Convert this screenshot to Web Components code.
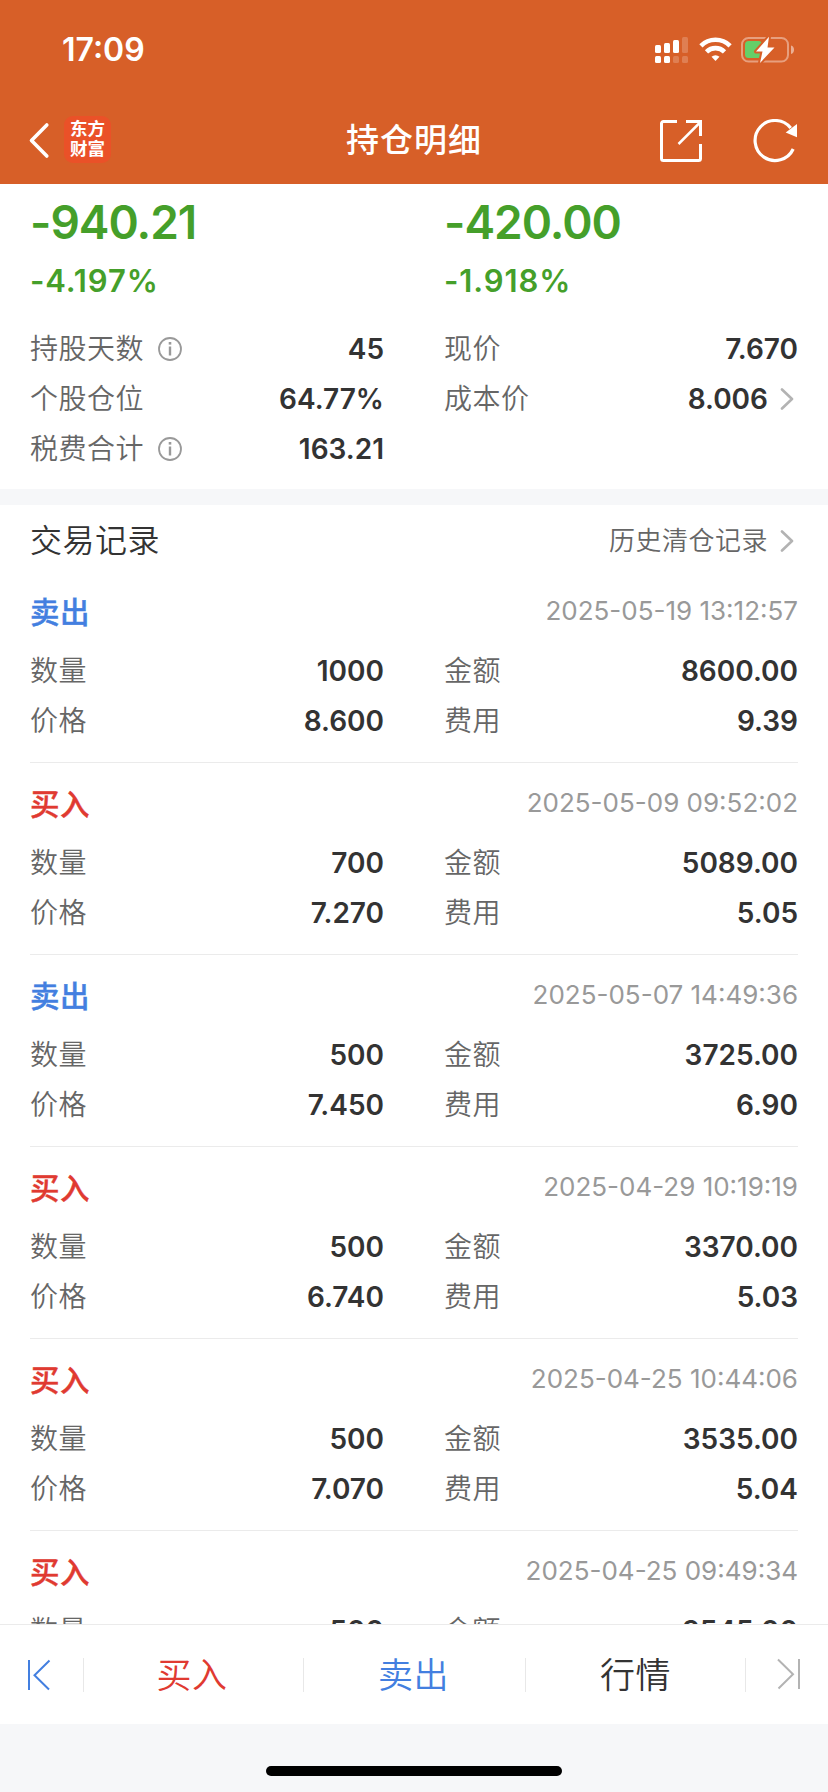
<!DOCTYPE html>
<html lang="zh-CN">
<head>
<meta charset="UTF-8">
<meta name="viewport" content="width=device-width, initial-scale=1.0">
<title>持仓明细</title>
<style>
    body {
        margin: 0;
        background: #fff;
        color: #333;
        font-family: Inter, "Noto Sans CJK SC", sans-serif;
    }
</style>
</head>
<body>
<position-page></position-page>

<script>
class StatusBar extends HTMLElement {
    constructor() {
        super();
        this.attachShadow({ mode: 'open' });
    }

    connectedCallback() {
        this.shadowRoot.innerHTML = `
            <style>
                :host {
                    display: flex;
                    justify-content: space-between;
                    align-items: center;
                    height: 99px;
                    padding: 0 33px 0 62px;
                    color: #fff;
                }

                .time {
                    font-size: 32px;
                    font-weight: 600;
                    line-height: 40px;
                }

                .icons {
                    display: flex;
                    gap: 11px;
                }

                svg {
                    display: block;
                }
            </style>
            <span class="time">${this.getAttribute('time')}</span>
            <div class="icons">
                <svg width="33" height="28" viewBox="0 0 33 28" fill="#fff">
                    <rect x="0" y="9" width="6" height="8" rx="1.5"/>
                    <rect x="9" y="7" width="6" height="10" rx="1.5"/>
                    <rect x="18" y="4" width="6" height="13" rx="1.5"/>
                    <rect x="27" y="1" width="6" height="16" rx="1.5" opacity=".2"/>
                    <rect x="0" y="20" width="6" height="7" rx="1.5"/>
                    <rect x="9" y="20" width="6" height="7" rx="1.5"/>
                    <rect x="18" y="20" width="6" height="7" rx="1.5" opacity=".2"/>
                    <rect x="27" y="20" width="6" height="7" rx="1.5" opacity=".2"/>
                </svg>
                <svg width="33" height="28" viewBox="0 0 33 28" fill="none" stroke="#fff">
                    <path d="M1.9 9.8a20.8 20.8 0 0 1 29.2 0" stroke-width="4.6"/>
                    <path d="M7.5 15.8a12.8 12.8 0 0 1 18 0" stroke-width="4.6"/>
                    <path d="M16.5 25l-4-4.2a5.9 5.9 0 0 1 8 0z" fill="#fff" stroke="none"/>
                </svg>
                <svg width="54" height="28" viewBox="0 0 54 28" style="margin-left:-2px">
                    <rect x="1" y="2" width="46" height="23.5" rx="6.5" fill="none" stroke="#fff" stroke-opacity=".4" stroke-width="2"/>
                    <path d="M50 9.5c4 1 4 7.5 0 8.5z" fill="#fff" opacity=".5"/>
                    <rect x="4" y="5" width="17" height="17" rx="3.5" fill="#65cf68"/>
                    <path d="M28 .8L15 15.5h6.5L19 27 33.5 11.5H26.5z" fill="#fff" stroke="#d75f28" stroke-width="4" paint-order="stroke" stroke-linejoin="round"/>
                </svg>
            </div>
        `;
    }
}

class NavBar extends HTMLElement {
    constructor() {
        super();
        this.attachShadow({ mode: 'open' });
    }

    connectedCallback() {
        this.shadowRoot.innerHTML = `
            <style>
                :host {
                    display: grid;
                    grid-template-columns: 1fr auto 1fr;
                    align-items: center;
                    height: 85px;
                    padding: 0 30px 0 28px;
                    box-sizing: border-box;
                    color: #fff;
                }

                .left, .right {
                    display: flex;
                    align-items: center;
                }

                .left {
                    gap: 14px;
                }

                .right {
                    justify-content: flex-end;
                    gap: 49px;
                }

                svg {
                    display: block;
                }

                .logo {
                    width: 47px;
                    height: 47px;
                    padding-top: 3px;
                    box-sizing: border-box;
                    border-radius: 9px;
                    background: #ea5128;
                    font-size: 17.5px;
                    font-weight: 700;
                    line-height: 20px;
                    text-align: center;
                    margin-top: -4px;
                }

                h1 {
                    margin: 0;
                    padding: 0 0 3px 2px;
                    font-size: 33px;
                    font-weight: 500;
                    line-height: 50px;
                    letter-spacing: 1px;
                }
            </style>
            <div class="left">
                <svg width="22" height="42" viewBox="0 0 22 42" fill="none" stroke="#fff" stroke-width="3.6" stroke-linecap="round" stroke-linejoin="round">
                    <path d="M18.8 4L3.5 19.5l15.3 15.5"/>
                </svg>
                <div class="logo">东方<br>财富</div>
            </div>
            <h1><slot></slot></h1>
            <div class="right">
                <svg width="43" height="45" viewBox="0 0 43 45" fill="none" stroke="#fff" stroke-width="3">
                    <path d="M17 2.5H3.500a2 2 0 0 0-2 2V39.500a2 2 0 0 0 2 2H38.500a2 2 0 0 0 2-2V25"/>
                    <path d="M26 2.500H40.500V17"/>
                    <path d="M18.500 25L39.500 4" stroke-width="2.500"/>
                </svg>
                <svg width="46" height="45" viewBox="0 0 46 45" fill="none" stroke="#fff" stroke-width="3.200">
                    <path d="M41.200 30A20 20 0 1 1 38.700 9"/>
                    <path d="M45 5V18.200L33.700 13.500z" fill="#fff" stroke="none"/>
                </svg>
            </div>
        `;
    }
}

class ArrowIcon extends HTMLElement {
    constructor() {
        super();
        this.attachShadow({ mode: 'open' });
        this.shadowRoot.innerHTML = `
            <style>
                :host {
                    display: block;
                    margin-left: 12px;
                    margin-right: 4px;
                }

                svg {
                    display: block;
                }
            </style>
            <svg width="14" height="22" viewBox="0 0 14 22" fill="none" stroke="#b3b3b3" stroke-width="2.6" stroke-linecap="round" stroke-linejoin="round">
                <path d="M2 1.5L12 11 2 20.5"/>
            </svg>
        `;
    }
}

// label on the left, value on the right
class InfoRow extends HTMLElement {
    constructor() {
        super();
        this.attachShadow({ mode: 'open' });
    }

    connectedCallback() {
        let tip = this.hasAttribute('tip') ? `
            <svg width="24" height="24" viewBox="0 0 24 24" fill="none" stroke="#999">
                <circle cx="12" cy="12" r="11" stroke-width="1.8"/>
                <path d="M12 9.5V18.5" stroke-width="2.4"/>
                <path d="M12 5V7.6" stroke-width="2.6"/>
            </svg>` : '';
        let arrow = this.hasAttribute('arrow') ? '<arrow-icon></arrow-icon>' : '';

        this.shadowRoot.innerHTML = `
            <style>
                :host {
                    display: flex;
                    align-items: center;
                    height: 50px;
                    font-size: 28px;
                    line-height: 40px;
                }

                .label {
                    color: #666;
                    font-weight: 350;
                    letter-spacing: .5px;
                }

                .value {
                    margin-left: auto;
                    font-weight: 600;
                }

                svg {
                    display: block;
                    margin-left: 14px;
                }
            </style>
            <span class="label">${this.getAttribute('label')}</span>
            ${tip}
            <span class="value">${this.getAttribute('value')}</span>
            ${arrow}
        `;
    }
}

class ProfitBlock extends HTMLElement {
    constructor() {
        super();
        this.attachShadow({ mode: 'open' });
    }

    connectedCallback() {
        this.shadowRoot.innerHTML = `
            <style>
                :host {
                    display: block;
                    margin-bottom: 23px;
                    color: #459f2a;
                    font-weight: 600;
                }

                .amount {
                    font-size: 46px;
                    line-height: 50px;
                    letter-spacing: -1px;
                }

                .percent {
                    margin-top: 14px;
                    font-size: 31px;
                    line-height: 40px;
                    letter-spacing: .9px;
                }
            </style>
            <div class="amount">${this.getAttribute('amount')}</div>
            <div class="percent">${this.getAttribute('percent')}</div>
        `;
    }
}

class TradeRecord extends HTMLElement {
    constructor() {
        super();
        this.attachShadow({ mode: 'open' });
    }

    connectedCallback() {
        let type = this.getAttribute('type');

        this.shadowRoot.innerHTML = `
            <style>
                :host {
                    display: block;
                    margin: 0 30px;
                    padding: 5px 0 16px;
                    border-bottom: 1px solid #ebebeb;
                }

                .head {
                    display: flex;
                    justify-content: space-between;
                    height: 70px;
                    line-height: 70px;
                }

                .type {
                    padding-top: 1px;
                    font-size: 29.5px;
                    font-weight: 500;
                    letter-spacing: .5px;
                    color: #e03a31;
                    -webkit-text-stroke: .4px;
                }

                .type.sell {
                    color: #437fe0;
                }

                .date {
                    font-size: 26px;
                    color: #999;
                }

                .grid {
                    display: grid;
                    grid-template-columns: 1fr 1fr;
                    column-gap: 60px;
                }
            </style>
            <div class="head">
                <span class="type ${type}">${type === 'sell' ? '卖出' : '买入'}</span>
                <span class="date">${this.getAttribute('date')}</span>
            </div>
            <div class="grid">
                <info-row label="数量" value="${this.getAttribute('count')}"></info-row>
                <info-row label="金额" value="${this.getAttribute('amount')}"></info-row>
                <info-row label="价格" value="${this.getAttribute('price')}"></info-row>
                <info-row label="费用" value="${this.getAttribute('fee')}"></info-row>
            </div>
        `;
    }
}

class TradeBar extends HTMLElement {
    constructor() {
        super();
        this.attachShadow({ mode: 'open' });
    }

    connectedCallback() {
        this.shadowRoot.innerHTML = `
            <style>
                :host {
                    display: grid;
                    grid-template-columns: 83px 220px 222px 220px 83px;
                    align-items: center;
                    height: 100px;
                    box-sizing: border-box;
                    border-top: 1px solid #ebebeb;
                    background: #fff;
                    font-size: 35px;
                    font-weight: 350;
                    line-height: 34px;
                    letter-spacing: .5px;
                    text-align: center;
                }

                .item {
                    height: 34px;
                    border-left: 1px solid #e8e8e8;
                    box-sizing: border-box;
                }

                .buy {
                    padding-right: 3px;
                    color: #e03a31;
                }

                .sell {
                    padding-right: 2px;
                    color: #437fe0;
                }

                .last {
                    padding-left: 31px;
                }

                .first {
                    padding-left: 28px;
                }

                svg {
                    display: block;
                }
            </style>
            <div class="first">
                <svg width="24" height="32" viewBox="0 0 24 32" fill="none" stroke="#437fe0" stroke-width="2">
                    <path d="M1 1V31"/>
                    <path d="M21.5 1.5L6.5 16.2 21 30.5"/>
                </svg>
            </div>
            <div class="item buy">买入</div>
            <div class="item sell">卖出</div>
            <div class="item">行情</div>
            <div class="item last">
                <svg width="24" height="32" viewBox="0 0 24 32" fill="none" stroke="#b3b3b3" stroke-width="2">
                    <path d="M22 1V31"/>
                    <path d="M1 1.5L16 16.2 1.5 30.5"/>
                </svg>
            </div>
        `;
    }
}

class PositionPage extends HTMLElement {
    constructor() {
        super();
        this.attachShadow({ mode: 'open' });
    }

    connectedCallback() {
        this.shadowRoot.innerHTML = `
            <style>
                :host {
                    display: flex;
                    flex-direction: column;
                    height: 1792px;
                    overflow: hidden;
                }

                header {
                    background: #d75f28;
                }

                main {
                    flex: 1;
                    min-height: 0;
                    overflow: hidden;
                }

                .summary {
                    display: grid;
                    grid-template-columns: 1fr 1fr;
                    column-gap: 60px;
                    padding: 13px 30px 15px;
                    border-bottom: 16px solid #f6f7f9;
                }

                .title {
                    display: flex;
                    align-items: center;
                    height: 60px;
                    padding: 6px 30px 0;
                    line-height: 44px;
                }

                h2 {
                    margin: 0 auto 0 0;
                    font-size: 32px;
                    font-weight: 350;
                    letter-spacing: .5px;
                }

                .history {
                    font-size: 26px;
                    font-weight: 350;
                    letter-spacing: .5px;
                    color: #666;
                }

                footer {
                    display: flex;
                    justify-content: center;
                    height: 68px;
                    background: #f6f7f9;
                }

                .home {
                    width: 296px;
                    height: 10px;
                    margin-top: 42px;
                    border-radius: 5px;
                    background: #000;
                }
            </style>
            <header>
                <status-bar time="17:09"></status-bar>
                <nav-bar>持仓明细</nav-bar>
            </header>
            <main>
                <section class="summary">
                    <profit-block amount="-940.21" percent="-4.197%"></profit-block>
                    <profit-block amount="-420.00" percent="-1.918%"></profit-block>
                    <info-row label="持股天数" value="45" tip></info-row>
                    <info-row label="现价" value="7.670"></info-row>
                    <info-row label="个股仓位" value="64.77%"></info-row>
                    <info-row label="成本价" value="8.006" arrow></info-row>
                    <info-row label="税费合计" value="163.21" tip></info-row>
                </section>
                <div class="title">
                    <h2>交易记录</h2>
                    <span class="history">历史清仓记录</span>
                    <arrow-icon></arrow-icon>
                </div>
                <trade-record type="sell" date="2025-05-19 13:12:57" count="1000" amount="8600.00" price="8.600" fee="9.39"></trade-record>
                <trade-record type="buy" date="2025-05-09 09:52:02" count="700" amount="5089.00" price="7.270" fee="5.05"></trade-record>
                <trade-record type="sell" date="2025-05-07 14:49:36" count="500" amount="3725.00" price="7.450" fee="6.90"></trade-record>
                <trade-record type="buy" date="2025-04-29 10:19:19" count="500" amount="3370.00" price="6.740" fee="5.03"></trade-record>
                <trade-record type="buy" date="2025-04-25 10:44:06" count="500" amount="3535.00" price="7.070" fee="5.04"></trade-record>
                <trade-record type="buy" date="2025-04-25 09:49:34" count="500" amount="3545.00" price="7.090" fee="5.04"></trade-record>
            </main>
            <trade-bar></trade-bar>
            <footer><div class="home"></div></footer>
        `;
    }
}

customElements.define('status-bar', StatusBar);
customElements.define('nav-bar', NavBar);
customElements.define('arrow-icon', ArrowIcon);
customElements.define('info-row', InfoRow);
customElements.define('profit-block', ProfitBlock);
customElements.define('trade-record', TradeRecord);
customElements.define('trade-bar', TradeBar);
customElements.define('position-page', PositionPage);
</script>
</body>
</html>
